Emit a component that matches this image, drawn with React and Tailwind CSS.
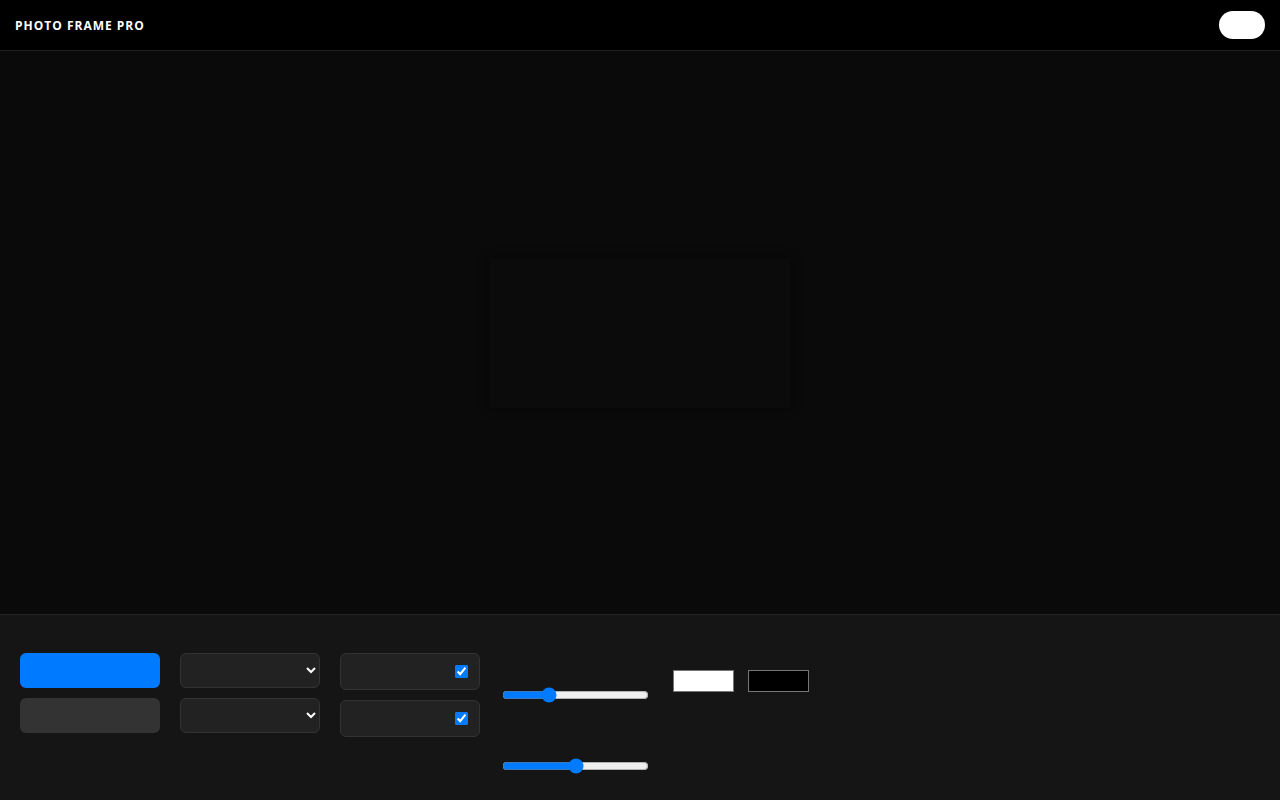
export default function App() {
  return (
    <div className="w-[1280px] h-[800px] flex flex-col bg-[#0a0a0a] overflow-hidden" style={{ fontFamily: '"Open Sans", "Noto Sans", sans-serif' }}>
      <header className="h-[51px] shrink-0 flex items-center justify-between px-[15px] bg-black border-b border-[#222]">
        <h1 className="text-[12px] font-bold tracking-[1px] text-white mt-[2px]">PHOTO FRAME PRO</h1>
        <button className="w-[46px] h-[28px] rounded-full bg-white"></button>
      </header>
      <main className="flex-1 flex items-center justify-center bg-[#0a0a0a]">
        <div className="w-[300px] h-[150px] bg-[#0b0b0b] shadow-[0_0_8px_2px_rgba(0,0,0,0.35)]"></div>
      </main>
      <section className="h-[186px] shrink-0 bg-[#151515] border-t border-[#232323] flex gap-[20px] px-[20px] pt-[38px]">
        <div className="w-[140px] flex flex-col gap-[10px]">
          <button className="h-[35px] rounded-[6px] bg-[#007aff]"></button>
          <button className="h-[35px] rounded-[6px] bg-[#333333]"></button>
        </div>
        <div className="w-[140px] flex flex-col gap-[10px]">
          <select className="h-[35px] rounded-[6px] bg-[#222] border border-[#333] text-white px-2 text-[13px]">
            <option></option>
          </select>
          <select className="h-[35px] rounded-[6px] bg-[#222] border border-[#333] text-white px-2 text-[13px]">
            <option></option>
          </select>
        </div>
        <div className="w-[140px] flex flex-col gap-[10px]">
          <label className="h-[37px] rounded-[6px] bg-[#222] border border-[#333] flex items-center justify-end pr-[11px]">
            <input type="checkbox" defaultChecked className="m-0 w-[13px] h-[13px] accent-[#007aff]" />
          </label>
          <label className="h-[37px] rounded-[6px] bg-[#222] border border-[#333] flex items-center justify-end pr-[11px]">
            <input type="checkbox" defaultChecked className="m-0 w-[13px] h-[13px] accent-[#007aff]" />
          </label>
        </div>
        <div className="w-[150px] flex flex-col pt-[34px]">
          <input type="range" min="0" max="100" defaultValue="30" className="w-[147px] mx-[2px] h-[16px] accent-[#007aff]" />
          <input type="range" min="0" max="100" defaultValue="50" className="w-[147px] mx-[2px] h-[16px] mt-[55px] accent-[#007aff]" />
        </div>
        <div className="flex gap-[14px] pt-[17px] pl-[3px]">
          <div className="w-[61px] h-[22px] bg-white border border-[#767676]"></div>
          <div className="w-[61px] h-[22px] bg-black border border-[#767676]"></div>
        </div>
      </section>
    </div>
  );
}
